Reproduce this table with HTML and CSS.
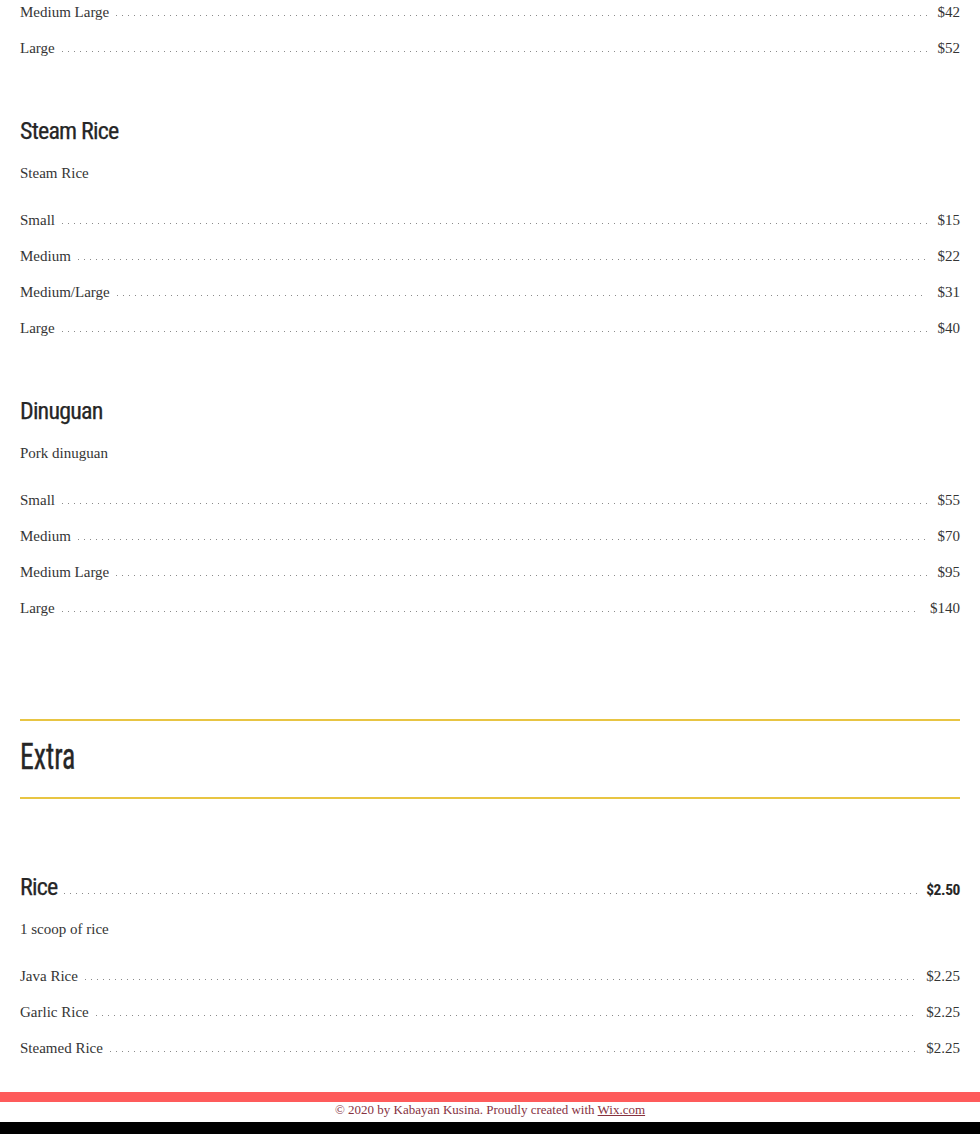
FILE: index.html
```html
<!DOCTYPE html>
<html>
<head>
<meta charset="utf-8">
<link rel="stylesheet" href="styles.css">
</head>
<body>
<main class="menu">
  <section class="dish dish-partial">
    <ul class="rows">
      <li class="row"><span class="name">Medium Large</span><span class="leader"></span><span class="price">$42</span></li>
      <li class="row"><span class="name">Large</span><span class="leader"></span><span class="price">$52</span></li>
    </ul>
  </section>

  <section class="dish">
    <h3 class="dish-title">Steam Rice</h3>
    <p class="dish-desc">Steam Rice</p>
    <ul class="rows">
      <li class="row"><span class="name">Small</span><span class="leader"></span><span class="price">$15</span></li>
      <li class="row"><span class="name">Medium</span><span class="leader"></span><span class="price">$22</span></li>
      <li class="row"><span class="name">Medium/Large</span><span class="leader"></span><span class="price">$31</span></li>
      <li class="row"><span class="name">Large</span><span class="leader"></span><span class="price">$40</span></li>
    </ul>
  </section>

  <section class="dish">
    <h3 class="dish-title">Dinuguan</h3>
    <p class="dish-desc">Pork dinuguan</p>
    <ul class="rows">
      <li class="row"><span class="name">Small</span><span class="leader"></span><span class="price">$55</span></li>
      <li class="row"><span class="name">Medium</span><span class="leader"></span><span class="price">$70</span></li>
      <li class="row"><span class="name">Medium Large</span><span class="leader"></span><span class="price">$95</span></li>
      <li class="row"><span class="name">Large</span><span class="leader"></span><span class="price">$140</span></li>
    </ul>
  </section>

  <header class="category">
    <h2 class="category-title">Extra</h2>
  </header>

  <section class="dish dish-extra">
    <div class="title-row">
      <h3 class="dish-title">Rice</h3><span class="leader"></span><span class="title-price">$2.50</span>
    </div>
    <p class="dish-desc">1 scoop of rice</p>
    <ul class="rows">
      <li class="row"><span class="name">Java Rice</span><span class="leader"></span><span class="price">$2.25</span></li>
      <li class="row"><span class="name">Garlic Rice</span><span class="leader"></span><span class="price">$2.25</span></li>
      <li class="row"><span class="name">Steamed Rice</span><span class="leader"></span><span class="price">$2.25</span></li>
    </ul>
  </section>
</main>
<footer class="site-footer">
  <div class="footer-bar"></div>
  <p class="footer-text">© 2020 by Kabayan Kusina. Proudly created with <a class="footer-link" href="#">Wix.com</a></p>
  <div class="footer-dark"></div>
</footer>
</body>
</html>
```

FILE: styles.css
```css
* { box-sizing: border-box; }

html, body {
  margin: 0;
  padding: 0;
  background: #fff;
}

body {
  font-family: "Liberation Serif", "Times New Roman", serif;
  color: #353535;
  font-size: 15px;
}

.menu {
  padding: 0 20px;
}

.dish {
  display: flex;
  flex-direction: column;
  margin-top: 55px;
}

.dish-partial {
  margin-top: 0;
}

.dish-title {
  margin: 0;
  font-family: "Roboto Condensed", "DejaVu Sans Condensed", sans-serif;
  font-weight: normal;
  font-size: 24px;
  line-height: 32px;
  letter-spacing: -0.8px;
  color: #262626;
  -webkit-text-stroke: 0.25px #262626;
}

.dish-desc {
  margin: 14px 0 0;
  line-height: 24px;
}

.rows {
  list-style: none;
  margin: 23px 0 0;
  padding: 0;
  display: flex;
  flex-direction: column;
  gap: 12px;
}

.dish-partial .rows {
  margin-top: 0;
}

.row {
  display: flex;
  align-items: baseline;
  line-height: 24px;
}

.leader {
  flex: 1;
  height: 2px;
  margin: 0 11px 0 6px;
  background-image: linear-gradient(to right, #8a8a8a 1px, rgba(255,255,255,0) 1px);
  background-size: 6px 1px;
  background-repeat: repeat-x;
  background-position: 1px 0;
}

.price {
  white-space: nowrap;
}

.category {
  margin-top: 99px;
  border-top: 2px solid #e8c543;
  border-bottom: 2px solid #e8c543;
  padding: 16px 0 20px;
}

.category-title {
  margin: 0;
  display: inline-block;
  font-family: "Roboto Condensed", "DejaVu Sans Condensed", sans-serif;
  font-weight: normal;
  font-size: 37px;
  line-height: 40px;
  color: #262626;
  -webkit-text-stroke: 0.4px #262626;
  transform: scaleX(0.75);
  transform-origin: left center;
}

.dish-extra {
  margin-top: 72px;
}

.title-row {
  display: flex;
  align-items: baseline;
}

.title-row .leader {
  margin: 0 8px 0 6px;
}

.title-price {
  font-family: "Roboto Condensed", "DejaVu Sans Condensed", sans-serif;
  font-weight: bold;
  font-size: 15.5px;
  letter-spacing: -0.4px;
  color: #262626;
}

.site-footer {
  margin-top: 32px;
}

.footer-bar {
  height: 10px;
  background: #fe5b5b;
}

.footer-text {
  margin: 0;
  height: 20px;
  line-height: 15px;
  text-align: center;
  font-size: 13px;
  color: #86323f;
}

.footer-link {
  color: #86323f;
  text-decoration: underline;
}

.footer-dark {
  height: 40px;
  background: #000;
}
```
